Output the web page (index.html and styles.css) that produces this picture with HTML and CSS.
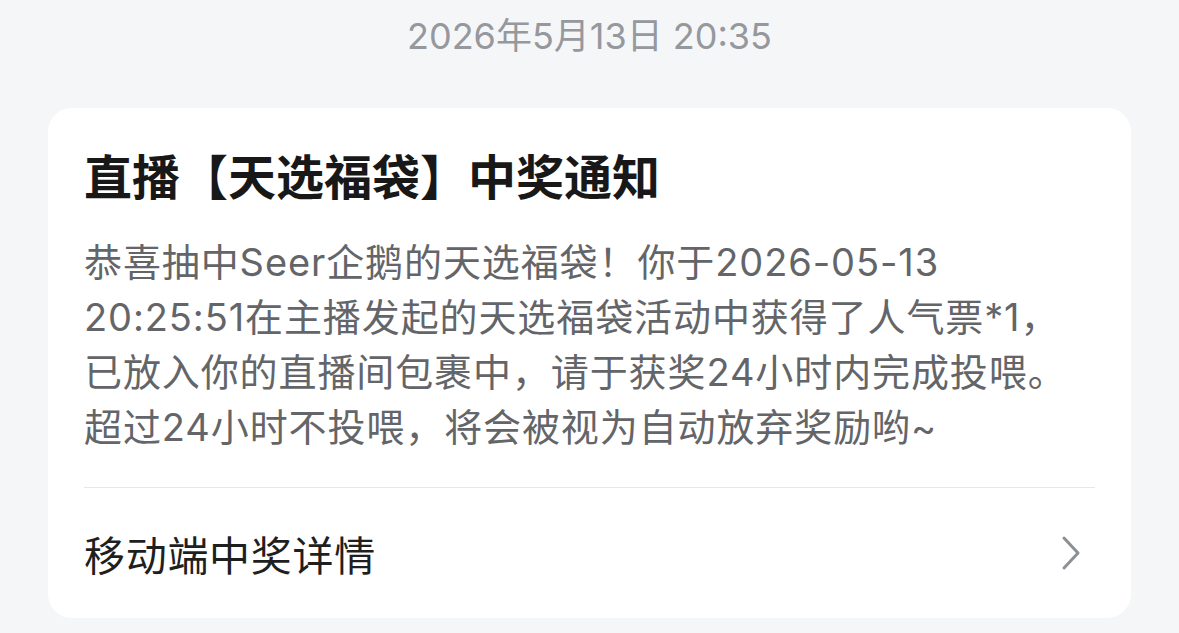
FILE: index.html
```html
<!DOCTYPE html>
<html lang="zh-CN">

<head>
  <meta charset="UTF-8">
  <meta name="viewport" content="width=device-width, initial-scale=1.0">
  <title>系统通知</title>
  <link rel="stylesheet" href="styles.css">
</head>

<body>
  <div class="msg-time">2026年5月13日 20:35</div>

  <div class="notice-card">
    <h1 class="notice-title">直播【天选福袋】中奖通知</h1>
    <p class="notice-text">
      恭喜抽中Seer企鹅的天选福袋！你于2026-05-13<br>
      20:25:51在主播发起的天选福袋活动中获得了人气票*1，<br>
      已放入你的直播间包裹中，请于获奖24小时内完成投喂。<br>
      超过24小时不投喂，将会被视为自动放弃奖励哟~
    </p>
    <a class="notice-link" href="#">
      <span>移动端中奖详情</span>
      <svg class="chevron" width="20" height="36" viewBox="0 0 20 36">
        <path d="M3 3 L17 18 L3 33" fill="none" stroke="#8c8f94" stroke-width="3" stroke-linecap="round" stroke-linejoin="round" />
      </svg>
    </a>
  </div>
</body>

</html>
```

FILE: styles.css
```css
body {
  margin: 0;
  padding: 0;
  background: #f5f6f8;
  font-family: "Inter", "Noto Sans CJK SC", "Noto Sans", sans-serif;
}

.msg-time {
  height: 108px;
  padding-top: 12px;
  box-sizing: border-box;
  text-align: center;
  font-size: 36px;
  line-height: 48px;
  color: #95989d;
}

.notice-card {
  margin: 0 48px;
  padding: 0 36px;
  background: #fff;
  border-radius: 24px;
}

.notice-title {
  margin: 0;
  padding-top: 40px;
  font-size: 48px;
  line-height: 60px;
  font-weight: 700;
  color: #181818;
}

.notice-text {
  margin: 27px 0 0;
  padding-bottom: 32px;
  font-size: 38px;
  line-height: 55px;
  letter-spacing: 0.9px;
  color: #636569;
  white-space: nowrap;
  border-bottom: 1px solid #e7e7e9;
}

.notice-link {
  display: flex;
  justify-content: space-between;
  align-items: center;
  height: 130px;
  padding-right: 14px;
  font-size: 41px;
  letter-spacing: 0.7px;
  color: #1f1f1f;
  text-decoration: none;
}
```
